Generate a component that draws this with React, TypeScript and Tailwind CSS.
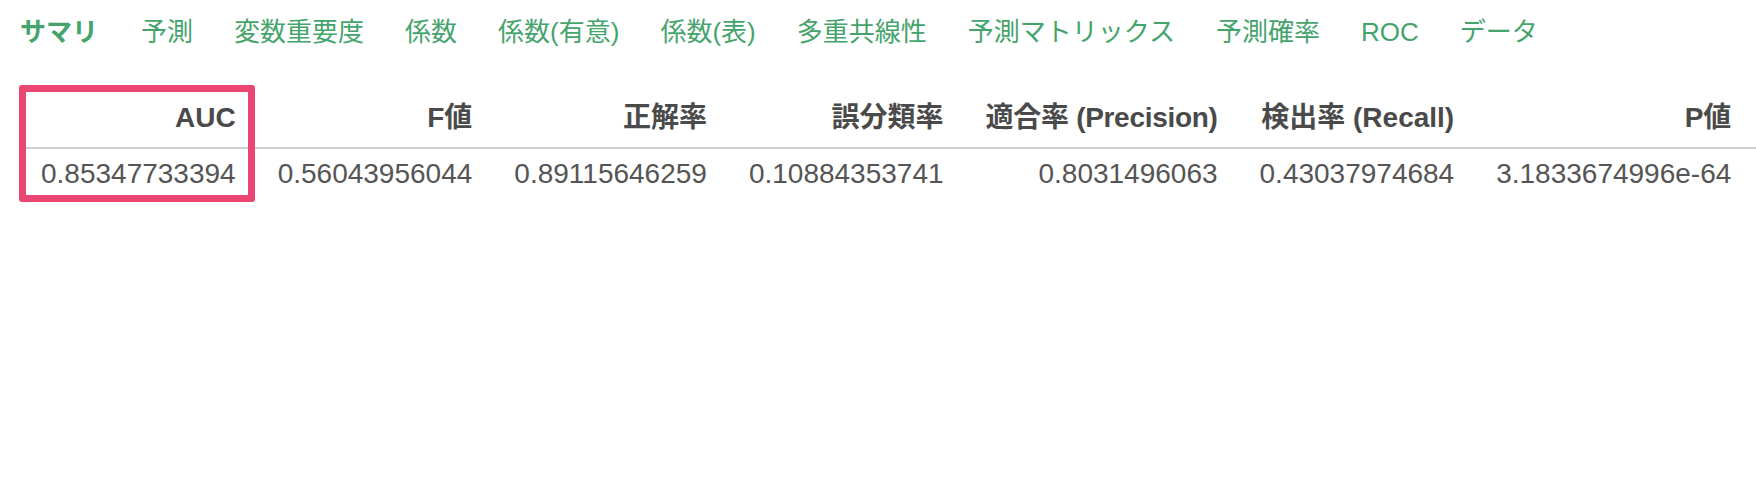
import React from 'react';

const tabs = ['サマリ', '予測', '変数重要度', '係数', '係数(有意)', '係数(表)', '多重共線性', '予測マトリックス', '予測確率', 'ROC', 'データ'];

const headers = ['AUC', 'F値', '正解率', '誤分類率', '適合率 (Precision)', '検出率 (Recall)', 'P値'];
const values = ['0.85347733394', '0.56043956044', '0.89115646259', '0.10884353741', '0.8031496063', '0.43037974684', '3.1833674996e-64'];

export default function App() {
  return (
    <div className="relative h-[480px] w-full overflow-hidden bg-white font-['Liberation_Sans','Noto_Sans_CJK_JP',sans-serif]">
      {/* tabs */}
      <nav className="flex h-[62px] items-start gap-[41px] pl-[20px] pt-[2px] text-[26px] leading-[60px] text-[#45a36c]">
        {tabs.map((t, i) => (
          <span key={t} className={i === 0 ? 'mr-[2px] whitespace-nowrap font-bold' : 'whitespace-nowrap'}>
            {t}
          </span>
        ))}
      </nav>

      {/* summary table */}
      <table className="ml-[20px] mt-[28px] border-collapse text-[28px] leading-[40px]">
        <thead>
          <tr className="border-b-2 border-[#cfcfcf]">
            {headers.map((h, i) => (
              <th
                key={h}
                className={
                  i === 4
                    ? 'whitespace-nowrap px-[21px] pb-[9px] pt-[8px] text-right font-bold tracking-[-0.3px] text-[#4a4a4a]'
                    : i === 6
                      ? 'whitespace-nowrap pl-[21px] pr-[26px] pb-[9px] pt-[8px] text-right font-bold text-[#4a4a4a]'
                      : 'whitespace-nowrap px-[21px] pb-[9px] pt-[8px] text-right font-bold text-[#4a4a4a]'
                }
              >
                {h}
              </th>
            ))}
          </tr>
        </thead>
        <tbody>
          <tr>
            {values.map((v, i) => (
              <td
                key={v}
                className={
                  i === 6
                    ? 'whitespace-nowrap pl-[21px] pr-[26px] pb-[8px] pt-[5px] text-right text-[#555555]'
                    : 'whitespace-nowrap px-[21px] pb-[8px] pt-[5px] text-right text-[#555555]'
                }
              >
                {v}
              </td>
            ))}
          </tr>
        </tbody>
      </table>

      {/* highlight around AUC column */}
      <div className="pointer-events-none absolute left-[19px] top-[85px] h-[117px] w-[236px] rounded-[3px] border-[7px] border-[#eb4571]" />
    </div>
  );
}
